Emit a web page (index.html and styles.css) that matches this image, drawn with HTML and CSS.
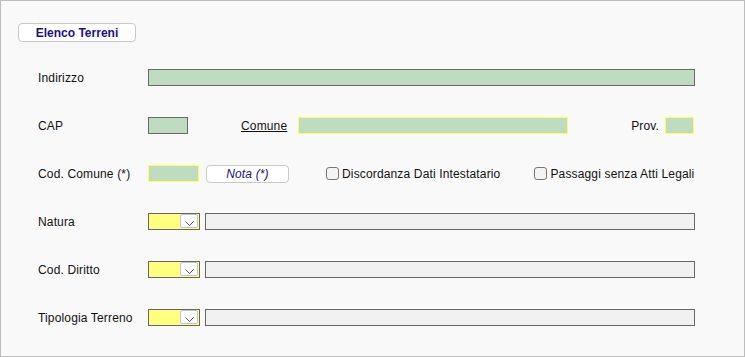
FILE: index.html
```html
<!DOCTYPE html>
<html lang="it">
<head>
<meta charset="utf-8">
<title>Elenco Terreni</title>
<link rel="stylesheet" href="styles.css">
</head>
<body>
<div class="frame">
  <div class="head">
    <button class="btn btn-title">Elenco Terreni</button>
  </div>
  <div class="form">
    <div class="row">
      <span class="label">Indirizzo</span>
      <span class="field green dark grow"></span>
    </div>
    <div class="row">
      <span class="label">CAP</span>
      <span class="field green dark w-cap"></span>
      <span class="link">Comune</span>
      <span class="field green yellow w-comune"></span>
      <span class="spacer"></span>
      <span class="plain">Prov.</span>
      <span class="field green yellow w-prov"></span>
    </div>
    <div class="row">
      <span class="label">Cod. Comune (*)</span>
      <span class="field green yellow w-cod"></span>
      <button class="btn btn-nota">Nota (*)</button>
      <label class="check check-1"><span class="box"></span>Discordanza Dati Intestatario</label>
      <label class="check check-2"><span class="box"></span>Passaggi senza Atti Legali</label>
    </div>
    <div class="row">
      <span class="label">Natura</span>
      <span class="select"><span class="arrow"><svg width="9" height="5" viewBox="0 0 9 5"><path d="M0.5 0.5 L4.5 4.5 L8.5 0.5" fill="none" stroke="#555" stroke-width="1"/></svg></span></span>
      <span class="field grey grow"></span>
    </div>
    <div class="row">
      <span class="label">Cod. Diritto</span>
      <span class="select"><span class="arrow"><svg width="9" height="5" viewBox="0 0 9 5"><path d="M0.5 0.5 L4.5 4.5 L8.5 0.5" fill="none" stroke="#555" stroke-width="1"/></svg></span></span>
      <span class="field grey grow"></span>
    </div>
    <div class="row">
      <span class="label">Tipologia Terreno</span>
      <span class="select"><span class="arrow"><svg width="9" height="5" viewBox="0 0 9 5"><path d="M0.5 0.5 L4.5 4.5 L8.5 0.5" fill="none" stroke="#555" stroke-width="1"/></svg></span></span>
      <span class="field grey grow"></span>
    </div>
  </div>
</div>
</body>
</html>
```
FILE: styles.css
```css
* { box-sizing: border-box; }
html, body { margin: 0; padding: 0; }
body {
  font-family: "Liberation Sans", Arial, sans-serif;
  font-size: 12px;
  color: #111;
  background: #f9f9f9;
}
.frame {
  width: 745px;
  height: 357px;
  border: 1px solid #bdbdbd;
  background: #f9f9f9;
  padding: 22px 49px 0 17px;
}
.head { display: flex; }
.btn {
  font-family: "Liberation Sans", Arial, sans-serif;
  font-size: 12px;
  background: #fff;
  border: 1px solid #c9c9c9;
  border-radius: 4px;
  color: #1c1086;
  padding: 0;
  margin: 0;
  display: flex;
  align-items: center;
  justify-content: center;
}
.btn-title {
  width: 118px;
  height: 19px;
  font-weight: bold;
}
.form {
  display: flex;
  flex-direction: column;
  gap: 31px;
  padding: 27px 0 0 20px;
  letter-spacing: 0.15px;
}
.row {
  display: flex;
  align-items: center;
  height: 17px;
}
.label {
  width: 110px;
  flex: none;
  color: #111;
}
.field {
  height: 17px;
  flex: none;
  border: 1px solid #666;
}
.green { background: #c0dcc0; }
.grey { background: #f1f1f1; }
.dark { border-color: #6a6a6a; }
.yellow { border-color: #ffff58; }
.grow { flex: 1; }
.w-cap { width: 40px; }
.link {
  text-decoration: underline;
  margin-left: 53px;
  width: 57px;
  flex: none;
}
.w-comune { width: 270px; }
.spacer { flex: 1; }
.plain { margin-right: 6px; }
.w-prov { width: 29px; margin-right: 1px; }
.w-cod { width: 51px; }
.btn-nota {
  width: 83px;
  height: 18px;
  margin-left: 7px;
  font-style: italic;
  font-weight: normal;
  letter-spacing: 0.15px;
}
.check {
  display: flex;
  align-items: center;
  color: #111;
}
.check-1 { margin-left: 37px; }
.check-2 { margin-left: 34px; }
.box {
  width: 13px;
  height: 13px;
  border: 1px solid #777;
  border-radius: 3px;
  background: #f4f4f4;
  margin-right: 3px;
}
.select {
  width: 52px;
  height: 17px;
  flex: none;
  background: #ffff80;
  border: 1px solid #666;
  display: flex;
  justify-content: flex-end;
  align-items: stretch;
  padding: 0 1px 1px 0;
  margin-right: 5px;
}
.arrow {
  width: 18px;
  background: #fff;
  border: 1px solid #c4c4c4;
  border-radius: 2px;
  display: flex;
  justify-content: center;
  align-items: flex-end;
  padding-bottom: 1px;
}
.arrow svg { display: block; }
```
